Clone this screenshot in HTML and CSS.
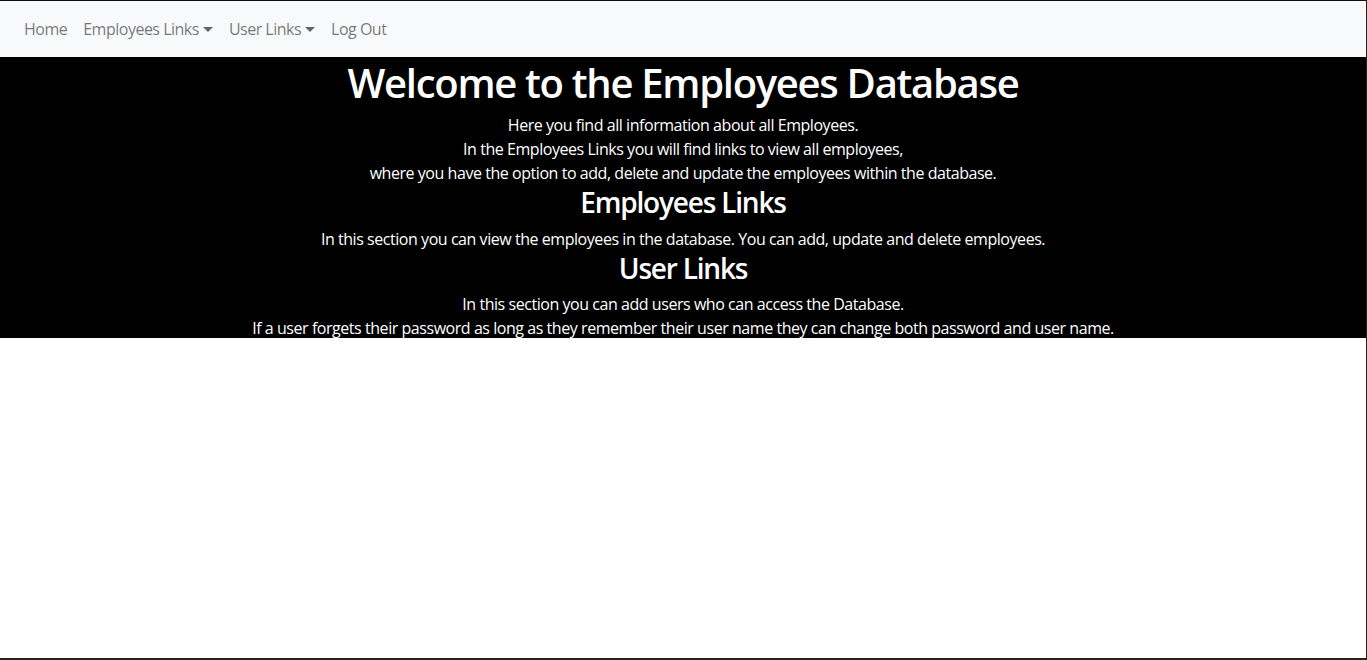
FILE: index.html
```html
<!DOCTYPE html>
<html lang="en">
<head>
<meta charset="utf-8">
<title>Employees Database</title>
<link rel="stylesheet" href="styles.css">
</head>
<body>
<nav class="navbar">
  <ul class="nav-list">
    <li><a class="nav-link" href="#">Home</a></li>
    <li><a class="nav-link dropdown" href="#">Employees Links</a></li>
    <li><a class="nav-link dropdown" href="#">User Links</a></li>
    <li><a class="nav-link" href="#">Log Out</a></li>
  </ul>
</nav>
<main class="hero">
  <h1 class="title">Welcome to the Employees Database</h1>
  <p class="text">Here you find all information about all Employees.</p>
  <p class="text">In the Employees Links you will find links to view all employees,</p>
  <p class="text">where you have the option to add, delete and update the employees within the database.</p>
  <h3 class="subtitle">Employees Links</h3>
  <p class="text">In this section you can view the employees in the database. You can add, update and delete employees.</p>
  <h3 class="subtitle">User Links</h3>
  <p class="text">In this section you can add users who can access the Database.</p>
  <p class="text">If a user forgets their password as long as they remember their user name they can change both password and user name.</p>
</main>
</body>
</html>
```
FILE: styles.css
```css
html, body {
  margin: 0;
  padding: 0;
}
body {
  font-family: "Open Sans", "Noto Sans", sans-serif;
  font-size: 16px;
  line-height: 24px;
  background: #fff;
  color: #212529;
  border-top: 1px solid #111;
  border-right: 1px solid #222;
  border-bottom: 2px solid #2a201c;
  box-sizing: border-box;
  height: 660px;
}
.navbar {
  background: #f8f9fa;
  padding: 8px 0;
  height: 56px;
  box-sizing: border-box;
}
.nav-list {
  list-style: none;
  margin: 0;
  padding: 0 0 0 16px;
  display: flex;
}
.nav-link {
  display: block;
  padding: 8px 8px;
  color: rgba(0, 0, 0, 0.55);
  text-decoration: none;
  font-size: 16px;
  letter-spacing: -0.5px;
}
.dropdown::after {
  content: "";
  display: inline-block;
  margin-left: 4px;
  vertical-align: 3px;
  border-top: 5px solid rgba(0, 0, 0, 0.6);
  border-left: 5px solid transparent;
  border-right: 5px solid transparent;
}
.hero {
  background: #000;
  color: #fff;
  text-align: center;
  height: 281px;
}
.title {
  margin: 0 0 6px;
  padding-top: 2px;
  font-size: 40px;
  line-height: 48px;
  font-weight: 600;
  letter-spacing: -1.3px;
}
.subtitle {
  margin: 0 0 7px;
  padding-top: 1px;
  font-size: 28px;
  line-height: 33.6px;
  font-weight: 600;
  letter-spacing: -1.2px;
}
.text {
  margin: 0;
  font-size: 16px;
  letter-spacing: -0.45px;
}
```
